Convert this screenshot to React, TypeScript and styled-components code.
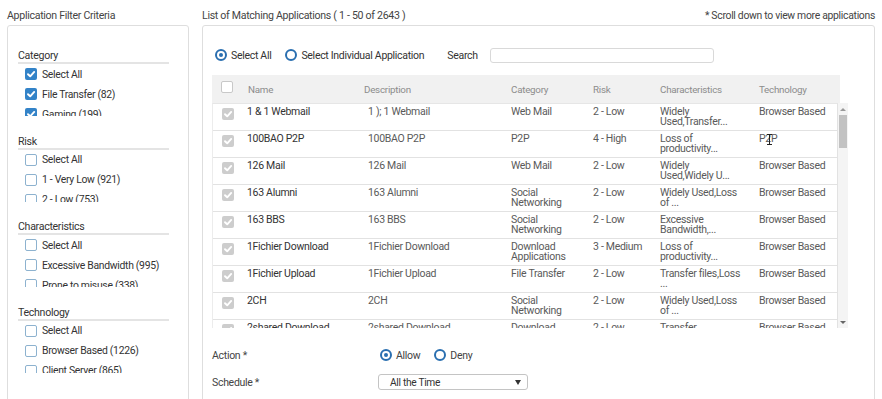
import React from 'react';
import styled, { createGlobalStyle } from 'styled-components';

const GlobalStyle = createGlobalStyle`
  html, body {
    margin: 0;
    padding: 0;
    background: #ffffff;
    overflow: hidden;
  }
  body {
    font-family: Roboto, 'Liberation Sans', Arial, sans-serif;
    letter-spacing: -0.3px;
    color: #444;
  }
  * {
    box-sizing: border-box;
  }
`;

const Page = styled.div`
  display: flex;
  gap: 13px;
  padding: 8px 7px 0 7px;
  height: 399px;
  overflow: hidden;
`;

const LeftColumn = styled.div`
  width: 182px;
  flex-shrink: 0;
`;

const RightColumn = styled.div`
  flex: 1;
  min-width: 0;
`;

const TitleRow = styled.div`
  display: flex;
  justify-content: space-between;
  align-items: center;
  height: 16px;
  margin-bottom: 1px;
`;

const PanelTitle = styled.div`
  font-size: 10.6px;
  line-height: 16px;
  color: #444;
`;

const ScrollNote = styled.div`
  font-size: 10.4px;
  line-height: 16px;
  color: #444;
`;

const Panel = styled.div`
  border: 1px solid #dedede;
  border-radius: 3px;
  height: 390px;
`;

const FilterPanel = styled(Panel)`
  padding: 24px 19px 0 10px;
`;

const FilterSection = styled.section`
  margin-bottom: 19.5px;
`;

const SectionHeading = styled.div`
  font-size: 10.6px;
  line-height: 12px;
  color: #333;
  border-bottom: 2px solid #e4e4e4;
`;

const CheckList = styled.div`
  height: 52px;
  overflow: hidden;
  padding-left: 7px;
`;

const CheckItem = styled.label`
  display: flex;
  align-items: center;
  gap: 5px;
  height: 20px;
  font-size: 10.4px;
  color: #333;
  white-space: nowrap;
`;

type BoxKind = 'blue' | 'empty' | 'gray' | 'header';

const Box = styled.span<{ $kind: BoxKind }>`
  display: inline-flex;
  align-items: center;
  justify-content: center;
  width: 12px;
  height: 12px;
  flex-shrink: 0;
  border-radius: 2px;
  background: ${(p) =>
    p.$kind === 'blue' ? '#3383c8' : p.$kind === 'gray' ? '#cdcdcd' : '#ffffff'};
  border: ${(p) =>
    p.$kind === 'empty'
      ? '1.5px solid #8db2cf'
      : p.$kind === 'header'
      ? '1px solid #c8c8c8'
      : 'none'};
`;

const CheckBox: React.FC<{ kind: BoxKind }> = ({ kind }) => (
  <Box $kind={kind}>
    {(kind === 'blue' || kind === 'gray') && (
      <svg width="10" height="10" viewBox="0 0 10 10">
        <path d="M2 5.2 L4.2 7.3 L8.2 2.9" fill="none" stroke="#fff" strokeWidth="1.9" strokeLinecap="round" strokeLinejoin="round" />
      </svg>
    )}
  </Box>
);

const AppPanel = styled(Panel)`
  padding: 21px 0 0 9px;
`;

const RadioRow = styled.div`
  display: flex;
  align-items: center;
  height: 16px;
  padding-left: 3px;
  margin-bottom: 12px;
  font-size: 10.5px;
  color: #333;
`;

const RadioOption = styled.label<{ $gap?: number }>`
  display: inline-flex;
  align-items: center;
  gap: 4px;
  margin-right: ${(p) => p.$gap ?? 14}px;
  white-space: nowrap;
`;

const RadioCircle = styled.span<{ $on?: boolean }>`
  width: 12px;
  height: 12px;
  border-radius: 50%;
  border: 2px solid #2a6fb0;
  display: inline-flex;
  align-items: center;
  justify-content: center;
  &::after {
    content: '';
    width: 4px;
    height: 4px;
    border-radius: 50%;
    background: ${(p) => (p.$on ? '#2a6fb0' : 'transparent')};
  }
`;

const SearchLabel = styled.span`
  margin-left: 9px;
  margin-right: 12px;
`;

const SearchInput = styled.div`
  width: 224px;
  height: 15px;
  border: 1px solid #d9d9d9;
  border-radius: 3px;
`;

const Table = styled.div`
  width: 636px;
`;

const HeaderRow = styled.div`
  display: grid;
  grid-template-columns: 35px 116px 148px 82px 67px 99px 1fr;
  align-items: center;
  width: 628px;
  height: 28px;
  background: #f1f1f1;
  font-size: 9.8px;
  letter-spacing: -0.25px;
  color: #8c8c8c;
`;

const HeaderCell = styled.div<{ $shift?: number }>`
  padding-left: ${(p) => p.$shift ?? 1}px;
  white-space: nowrap;
`;

const BoxCell = styled.div<{ $top?: number }>`
  padding-left: 9px;
  padding-top: ${(p) => p.$top ?? 0}px;
  margin-top: ${(p) => (p.$top ? 0 : -3)}px;
`;

const Body = styled.div`
  display: flex;
  height: 225px;
`;

const Rows = styled.div`
  width: 626px;
  overflow: hidden;
  border-top: 1px solid #e6e6e6;
  border-left: 1px solid #ececec;
  border-right: 1px solid #e2e2e2;
`;

const Row = styled.div`
  display: grid;
  grid-template-columns: 34px 116px 148px 82px 67px 99px 1fr;
  height: 27px;
  border-bottom: 1px solid #e2e2e2;
  font-size: 10.5px;
  line-height: 10px;
  color: #5a5a5a;
`;

const Cell = styled.div<{ $dark?: boolean; $shift?: number }>`
  position: relative;
  padding-top: 3px;
  padding-left: ${(p) => p.$shift ?? 0}px;
  color: ${(p) => (p.$dark ? '#333' : '#5a5a5a')};
  white-space: nowrap;
`;

const Cursor = styled.span`
  position: absolute;
  left: 8px;
  top: 3px;
  width: 5px;
  height: 11px;
  &::before {
    content: '';
    position: absolute;
    left: 2px;
    top: 0;
    width: 1px;
    height: 11px;
    background: #222;
  }
  &::after {
    content: '';
    position: absolute;
    left: 0;
    top: 0;
    width: 5px;
    height: 11px;
    border-top: 1px solid #222;
    border-bottom: 1px solid #222;
    box-sizing: border-box;
  }
`;

const ScrollTrack = styled.div`
  width: 10px;
  display: flex;
  flex-direction: column;
  align-items: center;
  background: #f4f4f4;
`;

const Arrow = styled.span<{ $down?: boolean }>`
  width: 0;
  height: 0;
  margin: 5px 0 4px;
  border-left: 3px solid transparent;
  border-right: 3px solid transparent;
  ${(p) => (p.$down ? 'border-top: 3px solid #666;' : 'border-bottom: 3px solid #999;')}
`;

const Thumb = styled.div`
  width: 8px;
  height: 33px;
  background: #c2c2c2;
`;

const Spacer = styled.div`
  flex: 1;
`;

const FormRow = styled.div<{ $top: number }>`
  display: flex;
  align-items: center;
  height: 16px;
  margin-top: ${(p) => p.$top}px;
  font-size: 10.5px;
  color: #444;
`;

const FormLabel = styled.div`
  width: 168px;
  flex-shrink: 0;
`;

const Select = styled.div`
  display: flex;
  align-items: center;
  justify-content: space-between;
  width: 150px;
  height: 16px;
  margin-left: -2px;
  padding: 0 6px 0 11px;
  border: 1px solid #c4c4c4;
  border-radius: 3px;
  font-size: 10.2px;
  color: #333;
`;

const SelectArrow = styled.span`
  width: 0;
  height: 0;
  border-left: 3px solid transparent;
  border-right: 3px solid transparent;
  border-top: 5px solid #333;
`;

const filters = [
  { title: 'Category', checked: true, items: ['Select All', 'File Transfer (82)', 'Gaming (199)'] },
  { title: 'Risk', checked: false, items: ['Select All', '1 - Very Low (921)', '2 - Low (753)'] },
  { title: 'Characteristics', checked: false, items: ['Select All', 'Excessive Bandwidth (995)', 'Prone to misuse (338)'] },
  { title: 'Technology', checked: false, items: ['Select All', 'Browser Based (1226)', 'Client Server (865)'] },
];

type AppRow = {
  name: string;
  desc: string;
  cat: string[];
  risk: string;
  chars: string[];
  tech: string;
  cursor?: boolean;
};

const apps: AppRow[] = [
  { name: '1 & 1 Webmail', desc: '1 ); 1 Webmail', cat: ['Web Mail'], risk: '2 - Low', chars: ['Widely', 'Used,Transfer...'], tech: 'Browser Based' },
  { name: '100BAO P2P', desc: '100BAO P2P', cat: ['P2P'], risk: '4 - High', chars: ['Loss of', 'productivity...'], tech: 'P2P', cursor: true },
  { name: '126 Mail', desc: '126 Mail', cat: ['Web Mail'], risk: '2 - Low', chars: ['Widely', 'Used,Widely U...'], tech: 'Browser Based' },
  { name: '163 Alumni', desc: '163 Alumni', cat: ['Social', 'Networking'], risk: '2 - Low', chars: ['Widely Used,Loss', 'of ...'], tech: 'Browser Based' },
  { name: '163 BBS', desc: '163 BBS', cat: ['Social', 'Networking'], risk: '2 - Low', chars: ['Excessive', 'Bandwidth,...'], tech: 'Browser Based' },
  { name: '1Fichier Download', desc: '1Fichier Download', cat: ['Download', 'Applications'], risk: '3 - Medium', chars: ['Loss of', 'productivity...'], tech: 'Browser Based' },
  { name: '1Fichier Upload', desc: '1Fichier Upload', cat: ['File Transfer'], risk: '2 - Low', chars: ['Transfer files,Loss', '...'], tech: 'Browser Based' },
  { name: '2CH', desc: '2CH', cat: ['Social', 'Networking'], risk: '2 - Low', chars: ['Widely Used,Loss', 'of ...'], tech: 'Browser Based' },
  { name: '2shared Download', desc: '2shared Download', cat: ['Download', 'Applications'], risk: '2 - Low', chars: ['Transfer', '...'], tech: 'Browser Based' },
];

const Lines: React.FC<{ lines: string[] }> = ({ lines }) => (
  <>
    {lines.map((l, i) => (
      <div key={i}>{l}</div>
    ))}
  </>
);

const App: React.FC = () => {
  return (
    <>
      <GlobalStyle />
      <Page>
        <LeftColumn>
          <TitleRow>
            <PanelTitle>Application Filter Criteria</PanelTitle>
          </TitleRow>
          <FilterPanel>
            {filters.map((f) => (
              <FilterSection key={f.title}>
                <SectionHeading>{f.title}</SectionHeading>
                <CheckList>
                  {f.items.map((item) => (
                    <CheckItem key={item}>
                      <CheckBox kind={f.checked ? 'blue' : 'empty'} />
                      {item}
                    </CheckItem>
                  ))}
                </CheckList>
              </FilterSection>
            ))}
          </FilterPanel>
        </LeftColumn>

        <RightColumn>
          <TitleRow>
            <PanelTitle>List of Matching Applications ( 1 - 50 of 2643 )</PanelTitle>
            <ScrollNote>* Scroll down to view more applications</ScrollNote>
          </TitleRow>
          <AppPanel>
            <RadioRow>
              <RadioOption>
                <RadioCircle $on />
                Select All
              </RadioOption>
              <RadioOption>
                <RadioCircle />
                Select Individual Application
              </RadioOption>
              <SearchLabel>Search</SearchLabel>
              <SearchInput />
            </RadioRow>

            <Table>
              <HeaderRow>
                <BoxCell>
                  <CheckBox kind="header" />
                </BoxCell>
                <HeaderCell>Name</HeaderCell>
                <HeaderCell>Description</HeaderCell>
                <HeaderCell $shift={0}>Category</HeaderCell>
                <HeaderCell $shift={0}>Risk</HeaderCell>
                <HeaderCell $shift={0}>Characteristics</HeaderCell>
                <HeaderCell $shift={0}>Technology</HeaderCell>
              </HeaderRow>
              <Body>
                <Rows>
                  {apps.map((a) => (
                    <Row key={a.name}>
                      <BoxCell $top={4}>
                        <CheckBox kind="gray" />
                      </BoxCell>
                      <Cell $dark>{a.name}</Cell>
                      <Cell $shift={5}>{a.desc}</Cell>
                      <Cell $shift={-1}>
                        <Lines lines={a.cat} />
                      </Cell>
                      <Cell $shift={-1}>{a.risk}</Cell>
                      <Cell $shift={-1}>
                        <Lines lines={a.chars} />
                      </Cell>
                      <Cell $shift={-1}>
                        {a.tech}
                        {a.cursor && <Cursor />}
                      </Cell>
                    </Row>
                  ))}
                </Rows>
                <ScrollTrack>
                  <Arrow />
                  <Thumb />
                  <Spacer />
                  <Arrow $down />
                </ScrollTrack>
              </Body>
            </Table>

            <FormRow $top={19}>
              <FormLabel>Action *</FormLabel>
              <RadioOption>
                <RadioCircle $on />
                Allow
              </RadioOption>
              <RadioOption>
                <RadioCircle />
                Deny
              </RadioOption>
            </FormRow>
            <FormRow $top={11}>
              <FormLabel>Schedule *</FormLabel>
              <Select>
                All the Time
                <SelectArrow />
              </Select>
            </FormRow>
          </AppPanel>
        </RightColumn>
      </Page>
    </>
  );
};

export default App;
